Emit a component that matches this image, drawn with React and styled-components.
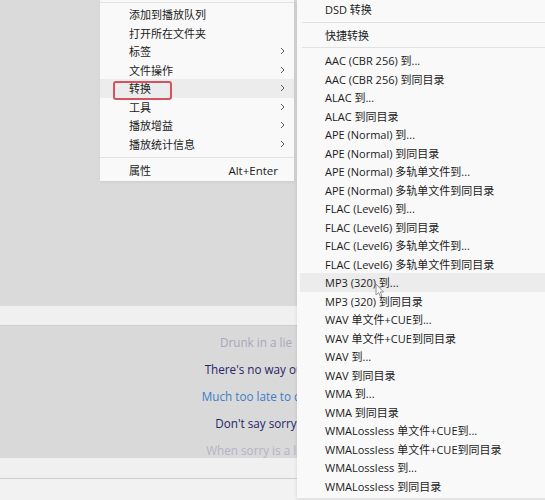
import React from 'react';
import styled, { createGlobalStyle } from 'styled-components';

const GlobalStyle = createGlobalStyle`
    html, body {
        margin: 0;
        padding: 0;
        background: #dadada;
    }
`

const mainItems = [
    { label: '添加到播放队列' },
    { label: '打开所在文件夹' },
    { label: '标签', sub: true },
    { label: '文件操作', sub: true },
    { label: '转换', sub: true, active: true },
    { label: '工具', sub: true },
    { label: '播放增益', sub: true },
    { label: '播放统计信息', sub: true },
]

const convertItems = [
    'AAC (CBR 256) 到...',
    'AAC (CBR 256) 到同目录',
    'ALAC 到...',
    'ALAC 到同目录',
    'APE (Normal) 到...',
    'APE (Normal) 到同目录',
    'APE (Normal) 多轨单文件到...',
    'APE (Normal) 多轨单文件到同目录',
    'FLAC (Level6) 到...',
    'FLAC (Level6) 到同目录',
    'FLAC (Level6) 多轨单文件到...',
    'FLAC (Level6) 多轨单文件到同目录',
    'MP3 (320) 到...',
    'MP3 (320) 到同目录',
    'WAV 单文件+CUE到...',
    'WAV 单文件+CUE到同目录',
    'WAV 到...',
    'WAV 到同目录',
    'WMA 到...',
    'WMA 到同目录',
    'WMALossless 单文件+CUE到...',
    'WMALossless 单文件+CUE到同目录',
    'WMALossless 到...',
    'WMALossless 到同目录',
]

const lyrics = [
    { text: 'Drunk in a lie', tone: 'past' },
    { text: "There's no way out", tone: 'near' },
    { text: 'Much too late to cry', tone: 'current' },
    { text: "Don't say sorry", tone: 'near' },
    { text: 'When sorry is a lie', tone: 'far' },
]

const Chevron = () => (
    <svg width="5" height="8" viewBox="0 0 5 8">
        <path d="M1 1 L4 4 L1 7" fill="none" stroke="#5a5a5a" strokeWidth="1" />
    </svg>
)

const Cursor = () => (
    <CursorMark width="10" height="15" viewBox="0 0 10 15">
        <path d="M1 1 L1 12 L3.6 9.6 L5.5 13.8 L7 13.1 L5.2 9 L8.6 9 Z"
            fill="#fdfdfd" fillOpacity="0.6" stroke="#8a8a8a" strokeWidth="0.9" strokeLinejoin="round" />
    </CursorMark>
)

export default function App() {
    return (
        <Window>
            <GlobalStyle />
            <TopArea />
            <Strip />
            <LyricsPanel>
                <LyricsColumn>
                    {lyrics.map((l) => (
                        <LyricLine key={l.text} $tone={l.tone}>{l.text}</LyricLine>
                    ))}
                </LyricsColumn>
            </LyricsPanel>
            <Strip $tall />
            <BottomArea />

            <ContextMenu>
                <Separator />
                {mainItems.map((item) => (
                    <MenuItem key={item.label} $active={item.active}>
                        <ItemLabel>{item.label}</ItemLabel>
                        {item.sub && <Chevron />}
                        {item.active && <Marker />}
                    </MenuItem>
                ))}
                <Separator $gap />
                <MenuItem>
                    <ItemLabel>属性</ItemLabel>
                    <Shortcut>Alt+Enter</Shortcut>
                </MenuItem>
            </ContextMenu>

            <SubMenu>
                <SubItem>DSD 转换</SubItem>
                <SubSeparator />
                <SubItem>快捷转换</SubItem>
                <SubSeparator />
                {convertItems.map((label) => (
                    <SubItem key={label} $hover={label === 'MP3 (320) 到...'}>{label}</SubItem>
                ))}
            </SubMenu>
            <Cursor />
        </Window>
    )
}

const Window = styled.div`
    position: relative;
    display: flex;
    flex-direction: column;
    width: 545px;
    height: 500px;
    overflow: hidden;
    font-family: "Segoe UI", "Open Sans", "Noto Sans CJK SC", sans-serif;
    background: #dadada;
`

const TopArea = styled.div`
    flex: 0 0 306px;
    background: #dadada;
`

const Strip = styled.div`
    flex: 0 0 ${(p) => (p.$tall ? '20px' : '19px')};
    background: #f0f0f0;
    border-bottom: 1px solid #cdcdcd;
`

const LyricsPanel = styled.div`
    flex: 0 0 132px;
    background: #d9d9d9;
    overflow: hidden;
`

const LyricsColumn = styled.div`
    width: 512px;
    padding-top: 3px;
    text-align: center;
    font-size: 11.7px;
`

const lyricColors = {
    past: '#a7a7bd',
    near: '#25256a',
    current: '#3b7dc6',
    far: '#b4b4c6',
}

const LyricLine = styled.div`
    height: 26.9px;
    line-height: 26.9px;
    color: ${(p) => lyricColors[p.$tone]};
    white-space: nowrap;
`

const BottomArea = styled.div`
    flex: 1;
    background: #f2f2f2;
`

const ContextMenu = styled.div`
    position: absolute;
    left: 100px;
    top: 0;
    width: 194px;
    padding-bottom: 1px;
    background: #f9f9f9;
    box-shadow: 1px 1px 3px rgba(0, 0, 0, 0.08);
    font-size: 11px;
    color: #1b1b1b;
`

const Separator = styled.div`
    height: 1px;
    margin: ${(p) => (p.$gap ? '4px 0 3px' : '2px 0 2px')};
    background: #e2e2e2;
`

const MenuItem = styled.div`
    position: relative;
    display: flex;
    align-items: center;
    height: 18.5px;
    padding: 0 9px 0 29px;
    background: ${(p) => (p.$active ? '#ececec' : 'transparent')};
`

const ItemLabel = styled.span`
    flex: 1;
    white-space: nowrap;
`

const Shortcut = styled.span`
    padding-right: 7px;
    font-size: 11.5px;
    color: #1b1b1b;
`

const Marker = styled.span`
    position: absolute;
    left: 13px;
    top: 1.5px;
    width: 55px;
    height: 15px;
    border: 2px solid #d65260;
    border-radius: 3px;
`

const SubMenu = styled.div`
    position: absolute;
    left: 297px;
    top: 0;
    width: 270px;
    height: 498px;
    background: #f9f9f9;
    box-shadow: -1px 1px 3px rgba(0, 0, 0, 0.08);
    font-size: 11px;
    color: #1b1b1b;
    border-bottom: 1px solid #e4e4e4;
`

const SubItem = styled.div`
    display: flex;
    align-items: center;
    height: 18.5px;
    margin-left: 3px;
    padding-left: 25px;
    white-space: nowrap;
    background: ${(p) => (p.$hover ? '#ececec' : 'transparent')};
`

const SubSeparator = styled.div`
    height: 1px;
    margin: 3px 0 3px 5px;
    background: #e2e2e2;
`

const CursorMark = styled.svg`
    position: absolute;
    left: 375px;
    top: 283px;
`
